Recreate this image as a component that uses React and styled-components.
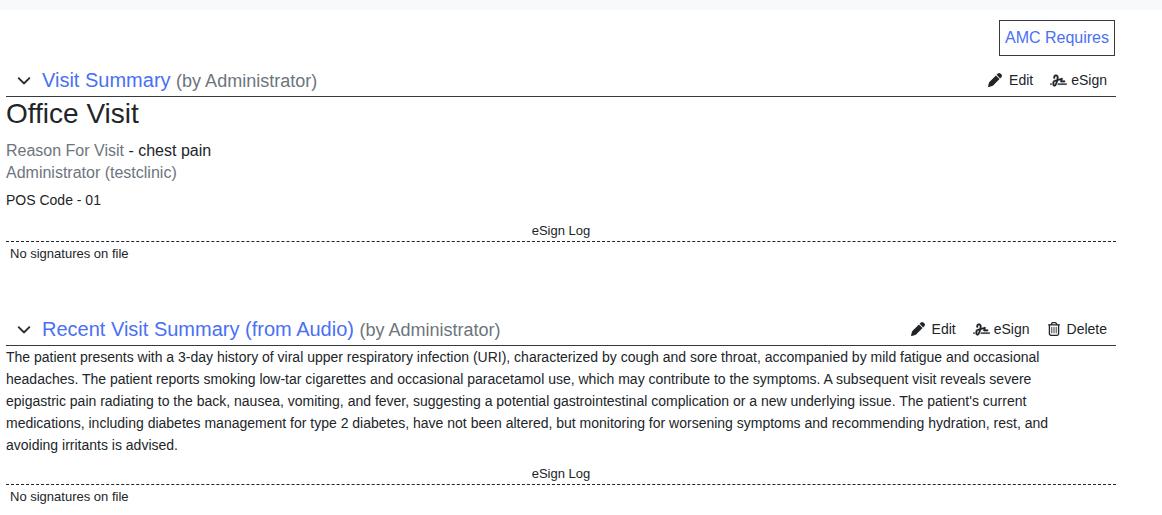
import React from "react";
import styled, { createGlobalStyle } from "styled-components";
import { FaChevronDown, FaPen, FaRegTrashCan, FaSignature } from "react-icons/fa6";

const GlobalStyle = createGlobalStyle`
  *, *::before, *::after { box-sizing: border-box; }
  body {
    margin: 0;
    background: #fff;
    color: #212529;
    font-family: "Liberation Sans", Arial, sans-serif;
    font-size: 14px;
    line-height: 22px;
  }
`;

const TopStrip = styled.div`
  height: 10px;
  background: #f8f9fa;
`;

const Page = styled.main`
  padding: 10px 46px 0 6px;
`;

const TopActions = styled.div`
  display: flex;
  justify-content: flex-end;
  padding-right: 1px;
`;

const AmcLink = styled.a`
  border: 1px solid #343a40;
  padding: 5px;
  color: #4970f5;
  font-size: 16px;
  line-height: 24px;
  text-decoration: none;
`;

const FormSection = styled.section`
  & + & {
    margin-top: 39px;
  }
`;

const FormHeader = styled.header`
  display: flex;
  justify-content: space-between;
  align-items: center;
  height: 41px;
  padding: 8px 9px 0 10px;
  border-bottom: 1px solid #343a40;
`;

const TitleGroup = styled.div`
  display: flex;
  align-items: center;
`;

const PlainButton = styled.button`
  display: inline-flex;
  align-items: center;
  gap: ${(p) => p.$gap || 0}px;
  margin: 0;
  padding: 0;
  border: 0;
  background: none;
  color: inherit;
  font: inherit;
  cursor: pointer;

  svg {
    stroke: currentColor;
    stroke-width: ${(p) => p.$weight || 0};
  }
`;

const Toggle = styled(PlainButton)`
  width: 26px;
  padding-left: 1px;
`;

const Title = styled.h2`
  margin: 0;
  color: #4970f5;
  font-size: 20px;
  font-weight: 400;
  line-height: 24px;
`;

const Author = styled.small`
  color: #6c757d;
  font-size: 18px;
`;

const Tools = styled.div`
  display: flex;
  align-items: center;
  gap: 17px;
`;

const VisitHeading = styled.h1`
  margin: 0 0 9px;
  font-size: 28px;
  font-weight: 400;
  line-height: 34px;
`;

const VisitLine = styled.p`
  margin: 0;
  font-size: 16px;
  line-height: 22px;
`;

const Muted = styled.span`
  color: #6c757d;
`;

const PosCode = styled.p`
  margin: 5px 0 2px;
`;

const Narrative = styled.p`
  margin: 0;
  padding-right: 24px;
`;

const Log = styled.section`
  padding-top: 8px;
  font-size: 13px;
  line-height: 20px;
`;

const LogTitle = styled.h3`
  margin: 0;
  border-bottom: 1px dashed #212529;
  font: inherit;
  text-align: center;
`;

const LogBody = styled.p`
  margin: 0;
  padding: 2px 4px;
`;

function ESignLog() {
  return (
    <Log>
      <LogTitle>eSign Log</LogTitle>
      <LogBody>No signatures on file</LogBody>
    </Log>
  );
}

function EncounterForm({ title, removable, children }) {
  return (
    <FormSection>
      <FormHeader>
        <TitleGroup>
          <Toggle
            type="button"
            $weight={8}
            aria-label={`Collapse ${title}`}
            aria-expanded="true"
          >
            <FaChevronDown size={14} />
          </Toggle>
          <Title>
            {title} <Author>(by Administrator)</Author>
          </Title>
        </TitleGroup>
        <Tools>
          <PlainButton type="button" $gap={7}>
            <FaPen size={14} />
            Edit
          </PlainButton>
          <PlainButton type="button" $gap={4} $weight={8}>
            <FaSignature size={17} />
            eSign
          </PlainButton>
          {removable && (
            <PlainButton type="button" $gap={6}>
              <FaRegTrashCan size={14} />
              Delete
            </PlainButton>
          )}
        </Tools>
      </FormHeader>
      {children}
      <ESignLog />
    </FormSection>
  );
}

export default function App() {
  return (
    <>
      <GlobalStyle />
      <TopStrip />
      <Page>
        <TopActions>
          <AmcLink href="#amc">AMC Requires</AmcLink>
        </TopActions>
        <EncounterForm title="Visit Summary">
          <VisitHeading>Office Visit</VisitHeading>
          <VisitLine>
            <Muted>Reason For Visit</Muted> - chest pain
          </VisitLine>
          <VisitLine>
            <Muted>Administrator (testclinic)</Muted>
          </VisitLine>
          <PosCode>POS Code - 01</PosCode>
        </EncounterForm>
        <EncounterForm title="Recent Visit Summary (from Audio)" removable>
          <Narrative>
            The patient presents with a 3-day history of viral upper respiratory infection (URI),
            characterized by cough and sore throat, accompanied by mild fatigue and occasional
            headaches. The patient reports smoking low-tar cigarettes and occasional paracetamol
            use, which may contribute to the symptoms. A subsequent visit reveals severe epigastric
            pain radiating to the back, nausea, vomiting, and fever, suggesting a potential
            gastrointestinal complication or a new underlying issue. The patient's current
            medications, including diabetes management for type 2 diabetes, have not been altered,
            but monitoring for worsening symptoms and recommending hydration, rest, and avoiding
            irritants is advised.
          </Narrative>
        </EncounterForm>
      </Page>
    </>
  );
}
